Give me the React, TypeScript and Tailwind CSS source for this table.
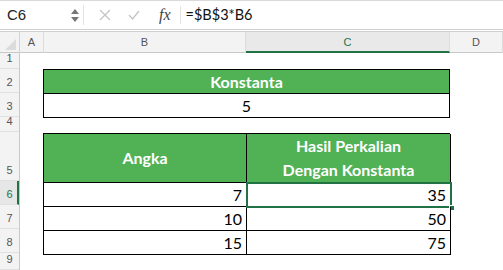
import React from 'react';

const cols = ['A', 'B', 'C', 'D'];
const rows = [
  { n: 1, h: 'h-[16px]' },
  { n: 2, h: 'h-[24px]' },
  { n: 3, h: 'h-[24px]' },
  { n: 4, h: 'h-[15px]' },
  { n: 5, h: 'h-[49px]' },
  { n: 6, h: 'h-[24px]' },
  { n: 7, h: 'h-[24px]' },
  { n: 8, h: 'h-[24px]' },
  { n: 9, h: 'h-[17px]' },
];

const data = [
  { angka: 7, hasil: 35 },
  { angka: 10, hasil: 50 },
  { angka: 15, hasil: 75 },
];

const FormulaBar = () => (
  <div className="flex h-[29px] items-center border-t border-[#dadada] bg-white font-['Liberation_Sans',sans-serif]">
    <div className="flex h-full w-[83px] items-center justify-between pl-[7px] pr-[4px]">
      <span className="text-[15px] text-[#222]">C6</span>
      <div className="flex flex-col items-center gap-[3px] text-[#777]">
        <svg width="8" height="5" viewBox="0 0 8 5">
          <path d="M4 0 L8 5 L0 5 Z" fill="currentColor" />
        </svg>
        <svg width="8" height="5" viewBox="0 0 8 5">
          <path d="M0 0 L8 0 L4 5 Z" fill="currentColor" />
        </svg>
      </div>
    </div>
    <div className="h-[20px] w-px bg-[#e2e2e2]" />
    <div className="flex items-center">
      <svg className="ml-[15px]" width="12" height="12" viewBox="0 0 12 12">
        <path d="M1 1 L11 11 M11 1 L1 11" stroke="#c4c4c4" strokeWidth="1.3" />
      </svg>
      <svg className="ml-[17px]" width="12" height="10" viewBox="0 0 12 10">
        <path d="M1 5 L4.5 9 L11 1" stroke="#c4c4c4" strokeWidth="1.3" fill="none" />
      </svg>
      <span className="ml-[19px] font-['Liberation_Serif',serif] text-[16px] italic text-[#444]">
        fx
      </span>
      <div className="ml-[9px] h-[18px] w-px bg-[#e2e2e2]" />
      <span className="ml-[5px] font-['Lato',sans-serif] text-[14.5px] text-[#111]">=$B$3*B6</span>
    </div>
  </div>
);

const ColumnHeaders = () => (
  <div className="grid h-[21px] grid-cols-[20px_24px_202px_204px_1fr] border-b border-[#c8c8c8] bg-[#f3f3f3] font-['Liberation_Sans',sans-serif] text-[11px] text-[#555]">
    <div className="relative border-r border-[#d4d4d4]">
      <svg className="absolute bottom-[3px] right-[3px]" width="11" height="11" viewBox="0 0 11 11">
        <path d="M11 0 L11 11 L0 11 Z" fill="#dcdcdc" />
      </svg>
    </div>
    {cols.map((c) => (
      <div
        key={c}
        className={`flex items-center justify-center border-r border-[#dcdcdc] ${
          c === 'C' ? 'border-b-2 border-b-[#217346] bg-[#e9e9e9] pt-[2px] text-[#217346]' : ''
        }`}
      >
        {c}
      </div>
    ))}
  </div>
);

const RowHeaders = () => (
  <div className="flex w-[20px] flex-col border-r border-[#c8c8c8] bg-[#f3f3f3] font-['Liberation_Sans',sans-serif] text-[11px] text-[#555]">
    {rows.map((r) => (
      <div
        key={r.n}
        className={`flex ${r.h} items-end justify-center border-b border-[#e0e0e0] pb-[2px] ${
          r.n === 6 ? 'border-r-2 border-r-[#217346] bg-[#e6e6e6] pl-[2px] text-[#217346]' : ''
        }`}
      >
        {r.n}
      </div>
    ))}
  </div>
);

const Sheet = () => (
  <div className="flex flex-1 flex-col pl-[23px] font-['Lato',sans-serif] text-black">
    <div className="h-[16px]" />
    {/* Konstanta box, merged B2:C3 */}
    <div className="grid w-[407px] grid-rows-[24px_24px] border-l border-t border-black">
      <div className="flex items-center justify-center border-b border-r border-black bg-[#51b155] text-[16px] font-bold text-white">
        Konstanta
      </div>
      <div className="flex items-center justify-center border-b border-r border-black text-[16px]">5</div>
    </div>
    <div className="h-[15px]" />
    {/* Angka / hasil table B5:C8 */}
    <div className="grid w-[407px] grid-cols-[203px_204px] grid-rows-[49px_24px_24px_24px] border-l border-t border-black">
      <div className="flex items-center justify-center border-b border-r border-black bg-[#51b155] text-[16px] font-bold text-white">
        Angka
      </div>
      <div className="flex flex-col items-center justify-center border-b border-r border-black bg-[#51b155] text-[16px] font-bold leading-[24px] text-white">
        <span>Hasil Perkalian</span>
        <span>Dengan Konstanta</span>
      </div>
      {data.map((d, i) => (
        <React.Fragment key={d.angka}>
          <div className="flex items-center justify-end border-b border-r border-black pr-[4px] text-[16px]">
            {d.angka}
          </div>
          <div className="relative flex items-center justify-end border-b border-r border-black pr-[4px] text-[16px]">
            {d.hasil}
            {i === 0 && (
              <>
                <div className="pointer-events-none absolute -left-px -top-px bottom-[-2px] right-[-2px] border-2 border-[#217346]" />
                <div className="absolute bottom-[-5px] right-[-5px] h-[6px] w-[6px] border border-white bg-[#217346]" />
              </>
            )}
          </div>
        </React.Fragment>
      ))}
    </div>
  </div>
);

export default function App() {
  return (
    <div className="h-[270px] w-[503px] overflow-hidden bg-white">
      <FormulaBar />
      <div className="h-[3px] border-y border-[#d0d0d0] bg-white" />
      <ColumnHeaders />
      <div className="flex">
        <RowHeaders />
        <Sheet />
      </div>
    </div>
  );
}
